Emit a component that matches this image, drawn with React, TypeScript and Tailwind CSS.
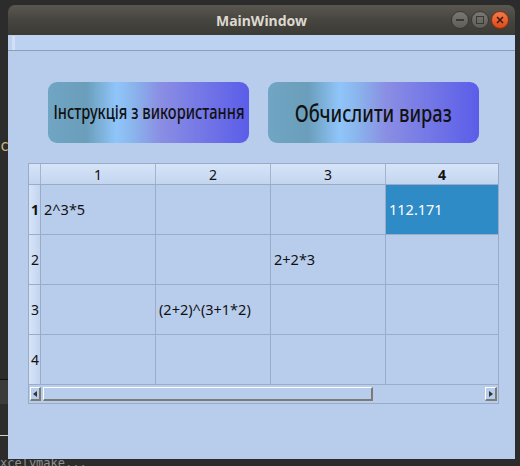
import React from "react";

const cols = [115, 115, 115, 112];
const rows: (string | null)[][] = [
  ["2^3*5", null, null, "112.171"],
  [null, null, "2+2*3", null],
  [null, "(2+2)^(3+1*2)", null, null],
  [null, null, null, null],
];

const btnGrad =
  "bg-[linear-gradient(90deg,#70a5c3_0%,#6a9ebb_19%,#90c5fa_34%,#8ab6ec_42%,#8a8ee3_56%,#5b5de9_100%)]";

export default function App() {
  const cellFont = { fontFamily: '"Noto Sans", "Open Sans", sans-serif' };
  const btnFont = { fontFamily: '"Noto Sans", "DejaVu Sans", sans-serif' };
  return (
    <div className="relative w-[520px] h-[466px] bg-[#2c2c2c] overflow-hidden">
      {/* desktop artifacts on the left */}
      <div className="absolute left-[0px] top-[139px] text-[15px] leading-none text-[#c9b27a]" style={{ fontFamily: '"DejaVu Sans Mono", monospace' }}>c</div>
      <div className="absolute left-0 top-[379px] w-[8px] h-[25px] bg-[#3b3b3b]" />
      <div className="absolute left-0 top-[379px] w-[8px] h-px bg-[#111]" />
      <div className="absolute left-0 top-[435px] w-[8px] h-px bg-[#d0d0d0]" />
      <div
        className="absolute left-0 top-[457px] text-[12px] leading-none text-[#8f8f8f]"
        style={{ fontFamily: '"DejaVu Sans Mono", monospace' }}
      >
        xcelymake...
      </div>

      {/* window */}
      <div className="absolute left-[8px] top-[5px] w-[507px] h-[454px] flex flex-col">
        <div className="relative h-[30px] rounded-t-[7px] bg-[linear-gradient(180deg,#5a5750_0%,#47453f_50%,#3c3a35_100%)] flex items-center justify-center">
          <span className="text-[14px] font-bold text-[#dcd8cf]" style={{ fontFamily: '"Noto Sans", "DejaVu Sans", sans-serif' }}>
            MainWindow
          </span>
          <div className="absolute right-[6px] top-[6px] flex gap-[2px]">
            <div className="w-[18px] h-[18px] rounded-full bg-[linear-gradient(180deg,#7a7873,#5f5d58)] border border-[#3a3833] flex items-center justify-center">
              <div className="w-[8px] h-[2px] bg-[#3b3934]" />
            </div>
            <div className="w-[18px] h-[18px] rounded-full bg-[linear-gradient(180deg,#7a7873,#5f5d58)] border border-[#3a3833] flex items-center justify-center">
              <div className="w-[8px] h-[8px] border-[1.5px] border-[#3b3934]" />
            </div>
            <div className="w-[18px] h-[18px] rounded-full bg-[linear-gradient(180deg,#f47a4b,#dd4a18)] border border-[#8a2e10] flex items-center justify-center">
              <svg width="8" height="8" viewBox="0 0 8 8">
                <path d="M1 1L7 7M7 1L1 7" stroke="#3a1a0c" strokeWidth="1.5" />
              </svg>
            </div>
          </div>
        </div>

        <div className="flex-1 bg-[#b8cdec] flex flex-col">
          {/* toolbar */}
          <div className="h-[16px] bg-[#bdd2f1] border-b border-[#8d9db5] flex items-center pl-[4px]">
            <div className="w-[3px] h-[14px] bg-[radial-gradient(circle,#e9eef7_0.6px,transparent_0.8px)] bg-[length:2px_2px]" />
          </div>

          {/* buttons */}
          <div className="flex gap-[19px] pl-[40px] pt-[31px]">
            <div className={`w-[201px] h-[61px] rounded-[9px] ${btnGrad} flex items-center justify-center overflow-hidden`}>
              <span className="whitespace-nowrap text-[19px] font-medium text-[#111] scale-x-[0.77] inline-block" style={btnFont}>
                Інструкція з використання
              </span>
            </div>
            <div className={`w-[211px] h-[61px] rounded-[9px] ${btnGrad} flex items-center justify-center overflow-hidden`}>
              <span className="whitespace-nowrap text-[24px] font-medium text-[#111] scale-x-[0.76] inline-block" style={btnFont}>
                Обчислити вираз
              </span>
            </div>
          </div>

          {/* table */}
          <div className="ml-[20px] mt-[20px] w-[471px] border border-[#9aabc5] bg-[#b8cdec]" style={cellFont}>
            {/* header */}
            <div className="flex h-[21px] bg-[linear-gradient(180deg,#d6e4f8,#c3d5ef)] border-b border-[#9aabc5]">
              <div className="w-[12px] border-r border-[#a3b4cc]" />
              {cols.map((w, i) => (
                <div
                  key={i}
                  className={`flex items-center justify-center text-[14px] text-[#111] ${i < 3 ? "border-r border-[#a3b4cc]" : ""} ${i === 3 ? "font-bold" : ""}`}
                  style={{ width: w }}
                >
                  {i + 1}
                </div>
              ))}
            </div>
            {rows.map((r, ri) => (
              <div key={ri} className="flex h-[50px] border-b border-[#9aadc8]">
                <div className="w-[12px] bg-[linear-gradient(90deg,#d6e4f8,#c3d5ef)] border-r border-[#9aabc5] flex items-center pl-[2px] text-[14px] text-[#111]">
                  <span className={ri === 0 ? "font-bold" : ""}>{ri + 1}</span>
                </div>
                {r.map((c, ci) => {
                  const sel = ri === 0 && ci === 3;
                  return (
                    <div
                      key={ci}
                      className={`flex items-center pl-[3px] text-[14.5px] whitespace-nowrap ${ci < 3 ? "border-r border-[#9aadc8]" : ""} ${sel ? "bg-[#2e8bc6] text-white" : "text-[#111]"}`}
                      style={{ width: cols[ci] }}
                    >
                      {c}
                    </div>
                  );
                })}
              </div>
            ))}
            {/* scrollbar */}
            <div className="h-[18px] flex items-center pl-[1px] pr-[1px] gap-[2px]">
              <div className="w-[11px] h-[14px] border-t border-l border-white border-b-2 border-r-2 border-b-[#7d7b76] border-r-[#7d7b76] flex items-center justify-center">
                <svg width="4" height="6" viewBox="0 0 4 6"><path d="M4 0L0 3L4 6Z" fill="#333" /></svg>
              </div>
              <div className="w-[330px] h-[14px] border-t border-l border-white border-b-2 border-r-2 border-b-[#7d7b76] border-r-[#7d7b76]" />
              <div className="flex-1" />
              <div className="w-[12px] h-[14px] border-t border-l border-white border-b-2 border-r-2 border-b-[#7d7b76] border-r-[#7d7b76] flex items-center justify-center">
                <svg width="4" height="6" viewBox="0 0 4 6"><path d="M0 0L4 3L0 6Z" fill="#333" /></svg>
              </div>
            </div>
          </div>
        </div>
      </div>
    </div>
  );
}
